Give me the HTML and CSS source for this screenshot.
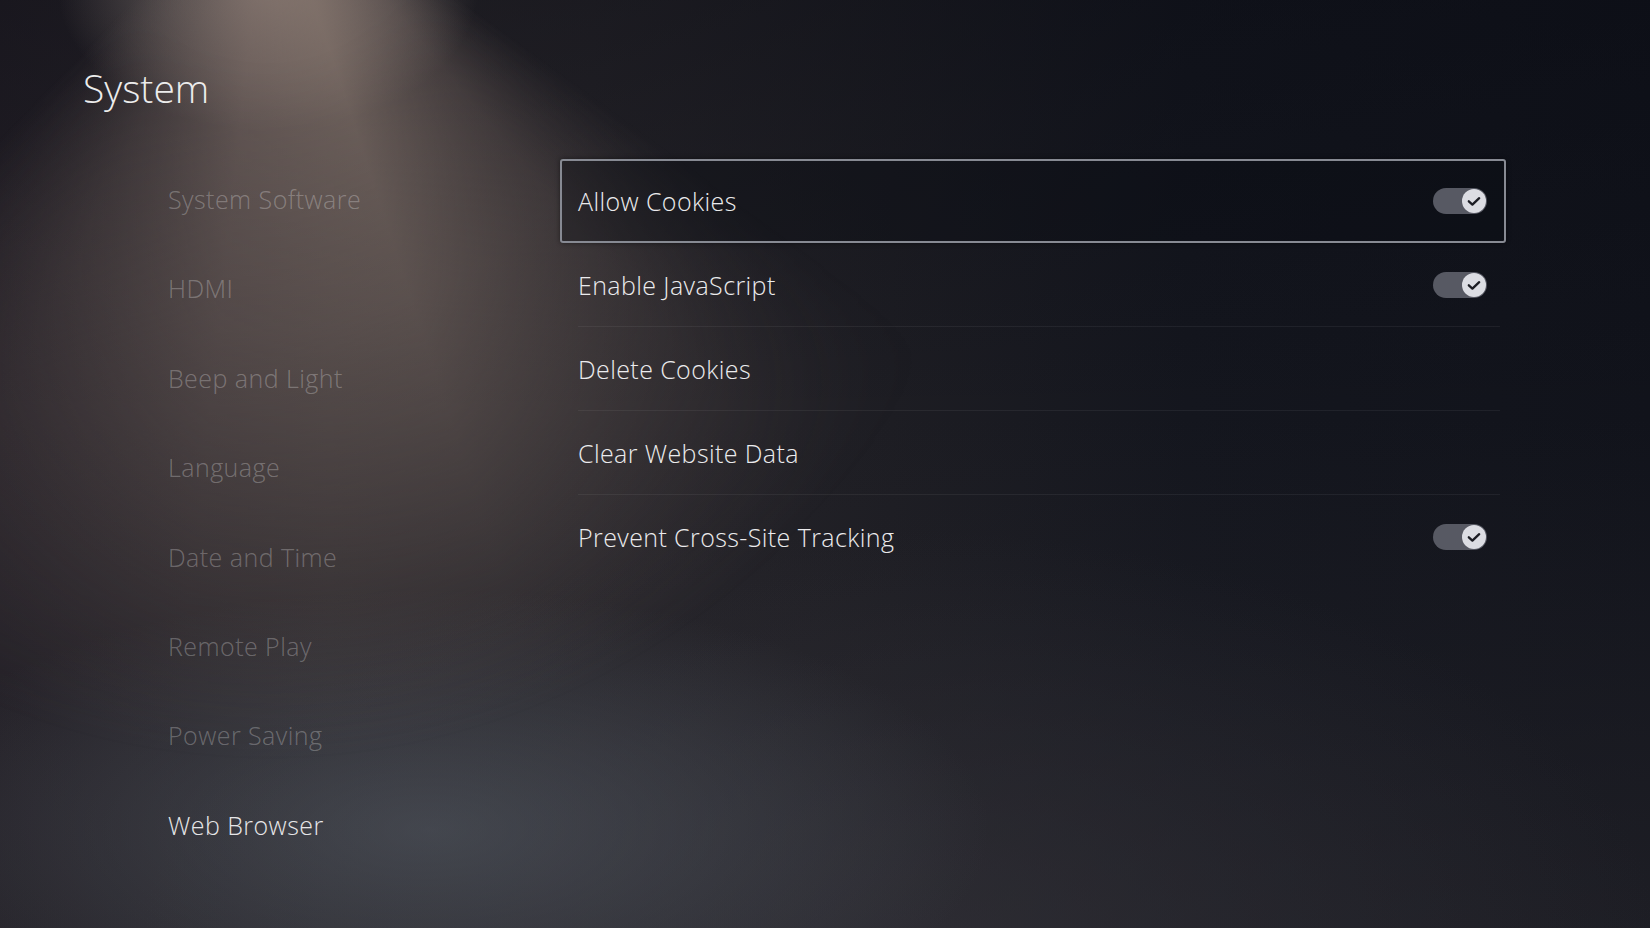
FILE: index.html
```html
<!DOCTYPE html>
<html lang="en">
<head>
<meta charset="utf-8">
<title>System</title>
<link rel="stylesheet" href="styles.css">
</head>
<body>
<div class="screen">
  <h1 class="title">System</h1>
  <div class="content">
    <nav class="sidebar">
      <div class="side-item">System Software</div>
      <div class="side-item">HDMI</div>
      <div class="side-item">Beep and Light</div>
      <div class="side-item">Language</div>
      <div class="side-item">Date and Time</div>
      <div class="side-item">Remote Play</div>
      <div class="side-item">Power Saving</div>
      <div class="side-item active">Web Browser</div>
    </nav>
    <section class="panel">
      <div class="row focused">
        <div class="row-inner">
          <span class="label">Allow Cookies</span>
          <span class="toggle"><span class="knob"><svg viewBox="0 0 24 24" width="24" height="24"><path d="M6.8 12.3 L10.4 15.6 L17.2 9.2" fill="none" stroke="#1c1d24" stroke-width="2.3" stroke-linecap="round" stroke-linejoin="round"/></svg></span></span>
        </div>
      </div>
      <div class="row">
        <div class="row-inner">
          <span class="label">Enable JavaScript</span>
          <span class="toggle"><span class="knob"><svg viewBox="0 0 24 24" width="24" height="24"><path d="M6.8 12.3 L10.4 15.6 L17.2 9.2" fill="none" stroke="#1c1d24" stroke-width="2.3" stroke-linecap="round" stroke-linejoin="round"/></svg></span></span>
        </div>
      </div>
      <div class="row">
        <div class="row-inner">
          <span class="label">Delete Cookies</span>
        </div>
      </div>
      <div class="row">
        <div class="row-inner">
          <span class="label">Clear Website Data</span>
        </div>
      </div>
      <div class="row last">
        <div class="row-inner">
          <span class="label">Prevent Cross-Site Tracking</span>
          <span class="toggle"><span class="knob"><svg viewBox="0 0 24 24" width="24" height="24"><path d="M6.8 12.3 L10.4 15.6 L17.2 9.2" fill="none" stroke="#1c1d24" stroke-width="2.3" stroke-linecap="round" stroke-linejoin="round"/></svg></span></span>
        </div>
      </div>
    </section>
  </div>
</div>
</body>
</html>
```
FILE: styles.css
```css
html, body {
  margin: 0;
  padding: 0;
  background: #14151c;
}

.screen {
  position: relative;
  width: 1650px;
  height: 928px;
  overflow: hidden;
  font-family: "Open Sans", "Noto Sans", "Liberation Sans", sans-serif;
  background:
    radial-gradient(ellipse 210px 140px at 268px -10px, rgba(195, 178, 166, 0.6), rgba(195, 178, 166, 0) 100%),
    radial-gradient(ellipse 560px 240px at 430px 830px, rgba(92, 100, 110, 0.5), rgba(92, 100, 110, 0) 100%),
    radial-gradient(ellipse 760px 420px at 900px 950px, rgba(52, 51, 58, 0.6), rgba(52, 51, 58, 0) 100%),
    linear-gradient(180deg, rgba(6, 8, 16, 0.35) 0%, rgba(6, 8, 16, 0) 45%),
    linear-gradient(180deg, rgba(0, 0, 0, 0) 45%, rgba(40, 39, 45, 0.55) 100%),
    linear-gradient(90deg, #231f26 0%, #2a272b 20%, #262429 36%, #1d1d23 54%, #14161e 72%, #11131b 100%);
}

/* stage light beam coming from the top */
.screen::before {
  content: "";
  position: absolute;
  inset: 0;
  pointer-events: none;
  background: conic-gradient(from 126deg at 268px -140px,
    rgba(120, 104, 98, 0) 0deg,
    rgba(124, 108, 102, 0.45) 14deg,
    rgba(132, 116, 108, 0.8) 36deg,
    rgba(126, 110, 104, 0.72) 60deg,
    rgba(112, 98, 94, 0.45) 80deg,
    rgba(110, 96, 92, 0) 98deg);
  -webkit-mask-image: radial-gradient(ellipse 800px 900px at 268px -140px, #000 22%, rgba(0, 0, 0, 0.7) 52%, transparent 100%);
  mask-image: radial-gradient(ellipse 800px 900px at 268px -140px, #000 22%, rgba(0, 0, 0, 0.7) 52%, transparent 100%);
}

.title,
.content {
  position: relative;
  z-index: 1;
}

.title {
  margin: 0;
  padding: 68px 0 0 83px;
  font-size: 39px;
  line-height: 39px;
  font-weight: 300;
  color: #ececec;
}

.content {
  display: flex;
  margin-top: 52px;
}

.sidebar {
  width: 392px;
  padding-left: 168px;
  margin-top: -4px;
  display: flex;
  flex-direction: column;
}

.side-item {
  height: 89.4px;
  line-height: 89.4px;
  font-size: 25px;
  font-weight: 350;
  letter-spacing: 0.45px;
  color: rgba(255, 255, 255, 0.27);
  white-space: nowrap;
}

.side-item.active {
  color: #e6e6e8;
}

.panel {
  width: 946px;
  display: flex;
  flex-direction: column;
}

.row {
  height: 84px;
  box-sizing: border-box;
  padding: 0 6px 0 18px;
  border-radius: 3px;
}

.row.focused {
  background: rgba(10, 11, 18, 0.32);
  box-shadow: inset 0 0 0 2px #878a93, 0 0 5px rgba(0, 0, 0, 0.45);
}

.row-inner {
  height: 100%;
  box-sizing: border-box;
  padding-right: 13px;
  display: flex;
  align-items: center;
  justify-content: space-between;
  border-bottom: 1px solid rgba(255, 255, 255, 0.06);
}

.row.focused .row-inner,
.row.last .row-inner {
  border-bottom-color: transparent;
}

.label {
  font-size: 25px;
  font-weight: 350;
  letter-spacing: 0.4px;
  color: #ebebed;
  white-space: nowrap;
}

.toggle {
  width: 54px;
  height: 26px;
  box-sizing: border-box;
  padding: 1px;
  border-radius: 13px;
  background: #575963;
  display: flex;
  align-items: center;
  justify-content: flex-end;
}

.knob {
  width: 24px;
  height: 24px;
  border-radius: 50%;
  background: #dcdde3;
  display: flex;
  align-items: center;
  justify-content: center;
}
```
